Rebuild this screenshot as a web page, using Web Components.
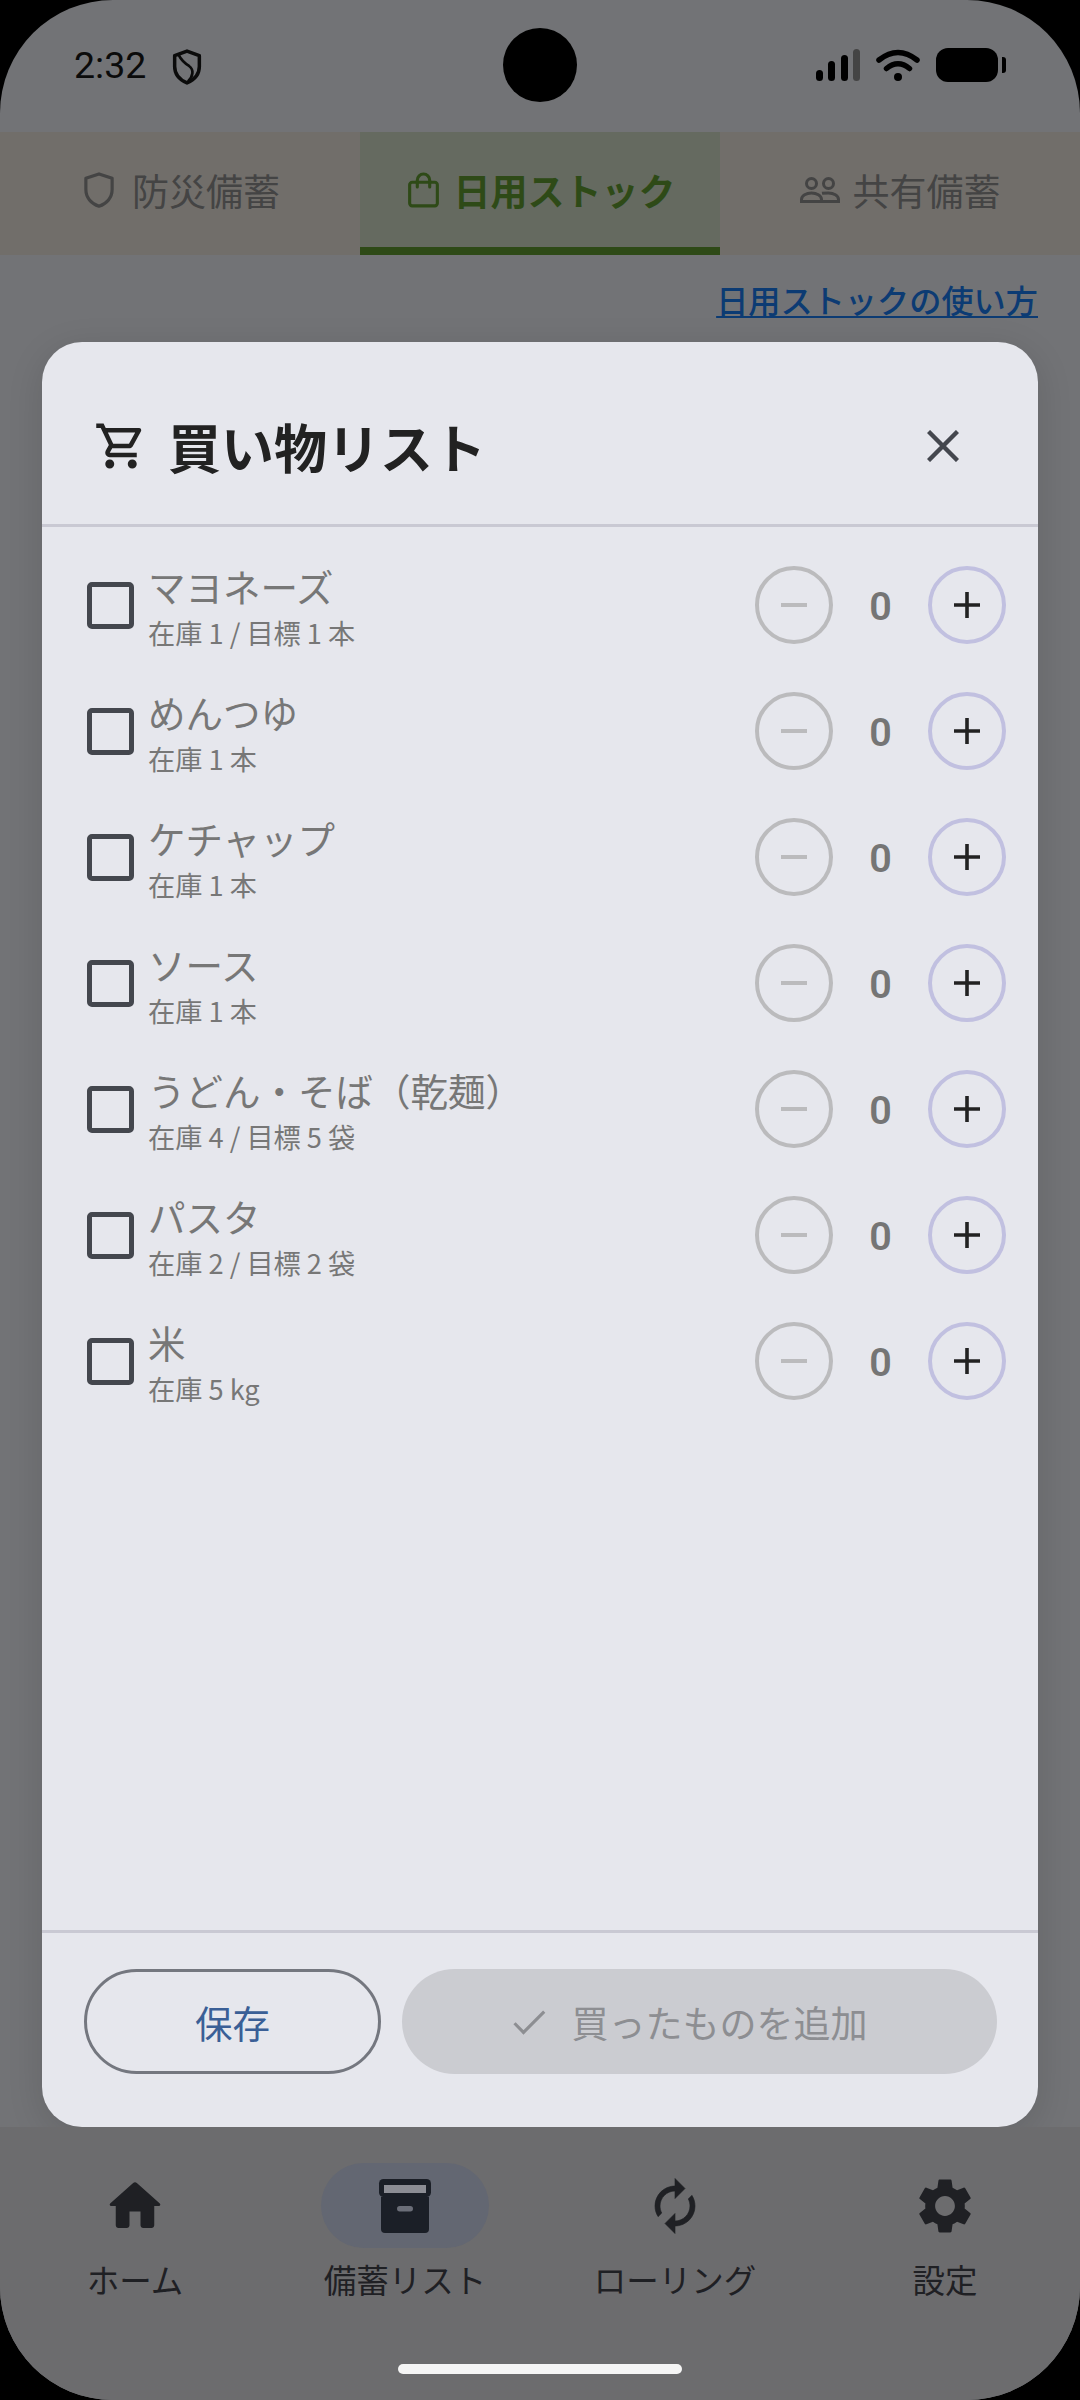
<!DOCTYPE html>
<html lang="ja">
<head>
<meta charset="utf-8">
<title>買い物リスト</title>
<style>
html,body{margin:0;padding:0;background:#000}
body{font-family:"Noto Sans CJK JP","Noto Sans",sans-serif;width:1080px;height:2400px;overflow:hidden}
</style>
</head>
<body>
<app-frame>
  <status-bar slot="top"></status-bar>
  <tab-bar slot="top">
    <tab-item icon="shield">防災備蓄</tab-item>
    <tab-item icon="bag" active>日用ストック</tab-item>
    <tab-item icon="people">共有備蓄</tab-item>
  </tab-bar>
  <help-link slot="top">日用ストックの使い方</help-link>

  <shopping-modal slot="overlay">
    <shop-row>マヨネーズ<span slot="sub">在庫 1 / 目標 1 本</span></shop-row>
    <shop-row>めんつゆ<span slot="sub">在庫 1 本</span></shop-row>
    <shop-row>ケチャップ<span slot="sub">在庫 1 本</span></shop-row>
    <shop-row>ソース<span slot="sub">在庫 1 本</span></shop-row>
    <shop-row>うどん・そば（乾麺）<span slot="sub">在庫 4 / 目標 5 袋</span></shop-row>
    <shop-row>パスタ<span slot="sub">在庫 2 / 目標 2 袋</span></shop-row>
    <shop-row>米<span slot="sub">在庫 5 kg</span></shop-row>
  </shopping-modal>

  <bottom-nav slot="bottom">
    <nav-item icon="home">ホーム</nav-item>
    <nav-item icon="archive" active>備蓄リスト</nav-item>
    <nav-item icon="sync">ローリング</nav-item>
    <nav-item icon="gear">設定</nav-item>
  </bottom-nav>
</app-frame>

<script>
const FONT = '"Noto Sans CJK JP","Noto Sans",sans-serif';
function shadow(el, html){ el.attachShadow({mode:'open'}).innerHTML = html; }

customElements.define('app-frame', class extends HTMLElement{
  connectedCallback(){ if(this.shadowRoot) return; shadow(this, `
  <style>
    :host{display:block;width:1080px;height:2400px;font-family:${FONT}}
    .screen{position:relative;width:1080px;height:2400px;border-radius:113px;overflow:hidden;background:#727376;display:flex;flex-direction:column}
    .grow{flex:1}
  </style>
  <div class="screen">
    <slot name="top"></slot>
    <div class="grow"></div>
    <slot name="overlay"></slot>
    <slot name="bottom"></slot>
  </div>`);}
});

customElements.define('status-bar', class extends HTMLElement{
  connectedCallback(){ if(this.shadowRoot) return; shadow(this, `
  <style>
    :host{display:flex;position:relative;height:132px;box-sizing:border-box;padding:0 74px 2px 74px;align-items:center;justify-content:space-between;color:#0b0b0b}
    .left{display:flex;align-items:center;gap:26px}
    .time{font:400 37.500px/44px Roboto,sans-serif}
    .right{display:flex;align-items:center;gap:16px}
    .cam{position:absolute;left:503px;top:28px;width:74px;height:74px;border-radius:50%;background:#000}
    svg{display:block}
    .shield{margin-top:4px}
    .bat{display:flex;align-items:center;gap:4px}
    .bat i{display:block;width:62px;height:34px;border-radius:12px;background:#000}
    .bat b{display:block;width:4px;height:16px;border-radius:0 3px 3px 0;background:#000}
  </style>
  <div class="left">
    <span class="time">2:32</span>
    <svg class="shield" width="30" height="36" viewBox="0 0 28 35" fill="none" stroke="#0b0b0b" stroke-width="3.400" stroke-linejoin="round"><path d="M14 2 26 6.500V17c0 8-5 13-12 16C7 30 2 25 2 17V6.500Z"/><path d="M6 6c3 6 6 8 10 10.500 5 3.500 4 10-1 15" stroke-width="2.600"/></svg>
  </div>
  <div class="cam"></div>
  <div class="right">
    <svg width="44" height="32" viewBox="0 0 44 32"><rect x="0" y="21" width="7" height="11" rx="3.500" fill="#000"/><rect x="12" y="12" width="7" height="20" rx="3.500" fill="#000"/><rect x="25" y="6" width="7" height="26" rx="3.500" fill="#000"/><rect x="37" y="0" width="7" height="32" rx="3.500" fill="#444"/></svg>
    <svg width="44" height="32" viewBox="0 0 44 32" fill="none" stroke="#000" stroke-linecap="round"><path d="M3 11Q22-4 41 11" stroke-width="5.500"/><path d="M10.500 19.500Q22 10 33.500 19.500" stroke-width="5.500"/><circle cx="22" cy="28" r="4" fill="#000" stroke="none"/></svg>
    <div class="bat"><i></i><b></b></div>
  </div>`);}
});

customElements.define('tab-bar', class extends HTMLElement{
  connectedCallback(){ if(this.shadowRoot) return; shadow(this, `
  <style>:host{display:grid;grid-template-columns:repeat(3,1fr);height:123px}</style><slot></slot>`);}
});

const TAB_ICONS = {
  shield:`<svg width="30" height="36" viewBox="0 0 28 34" fill="none" stroke="currentColor" stroke-width="3" stroke-linejoin="round"><path d="M14 1.800 26.400 6v10.500c0 7.500-5 13.500-12.400 15.800C6.600 30 1.600 24 1.600 16.500V6Z"/></svg>`,
  bag:`<svg width="31" height="36" viewBox="0 0 30 34" fill="none" stroke="currentColor" stroke-width="3" stroke-linejoin="round"><rect x="1.600" y="9.500" width="26.800" height="22.900" rx="2.500"/><path d="M9 14V7.500a6 6 0 0 1 12 0V14" stroke-linecap="round"/></svg>`,
  people:`<svg width="40" height="26" viewBox="0 0 40 26" fill="none" stroke="currentColor" stroke-width="3"><circle cx="11.500" cy="6.500" r="5"/><circle cx="28.500" cy="6.500" r="5"/><path d="M1.500 24.500v-2c0-4 5-6.500 10-6.500s10 2.500 10 6.500v2H1.500Z"/><path d="M22 16.300c2-.3 4-.3 6.500-.3 5 0 10 2.500 10 6.500v2H21.500"/></svg>`
};
customElements.define('tab-item', class extends HTMLElement{
  connectedCallback(){ if(this.shadowRoot) return; shadow(this, `
  <style>
    :host{display:flex;align-items:center;justify-content:center;gap:18px;box-sizing:border-box;background:#716e6a;color:#444;font-size:37px;line-height:50px;font-family:${FONT};padding:0 0 8px 4px}
    :host([icon=people]){gap:13px;padding-left:0}
    :host([active]){background:#656a60;color:#2e4a17;font-weight:700;gap:15px;border-bottom:8px solid #2e4a17;padding:0 0 0 3px}
    svg{display:block}
  </style>${TAB_ICONS[this.getAttribute('icon')]}<span><slot></slot></span>`);}
});

customElements.define('help-link', class extends HTMLElement{
  connectedCallback(){ if(this.shadowRoot) return; shadow(this, `
  <style>
    :host{display:flex;justify-content:flex-end;padding:22px 42px 0 0;color:#0c3b73;font-size:32.200px;line-height:44px;font-weight:500;font-family:${FONT}}
    span{text-decoration:underline;text-underline-offset:3px;text-decoration-thickness:2px}
  </style><span><slot></slot></span>`);}
});

customElements.define('shopping-modal', class extends HTMLElement{
  connectedCallback(){ if(this.shadowRoot) return; shadow(this, `
  <style>
    :host{display:flex;flex-direction:column;position:absolute;left:42px;top:342px;width:996px;height:1785px;background:#e6e7ed;border-radius:40px;box-shadow:0 8px 36px rgba(0,0,0,.12);z-index:1;font-family:${FONT}}
    header{display:flex;align-items:center;box-sizing:border-box;height:185px;padding:26px 79px 0 52px;border-bottom:3px solid #c9c9d3;flex:none}
    h1{margin:0 0 0 20px;flex:1;font-size:53px;line-height:70px;font-weight:700;color:#222}
    .list{flex:1;padding-top:15px}
    footer{flex:none;display:flex;gap:21px;box-sizing:border-box;height:197px;border-top:3px solid #c9c9d3;padding:36px 41px 0 42px}
    button{all:unset;display:flex;align-items:center;justify-content:center;box-sizing:border-box;height:105px;border-radius:53px;font-size:37.500px;font-family:${FONT}}
    .save{width:297px;border:3px solid #74777f;color:#3a5f96}
    .add{flex:1;background:#cbccd1;color:#8d8e92;gap:21px;font-size:37px;padding-right:25px}
    svg{display:block}
    .close{stroke:#44474e}
  </style>
  <header>
    <svg width="54" height="54" viewBox="0 0 24 24" fill="#222"><path d="M15.550 13c.75 0 1.410-.41 1.750-1.030l3.580-6.490c.37-.66-.11-1.480-.87-1.480H5.210l-.94-2H1v2h2l3.600 7.590-1.350 2.440C4.520 15.370 5.480 17 7 17h12v-2H7l1.100-2h7.450zM6.160 6h12.150l-2.760 5H8.530L6.160 6zM7 18c-1.100 0-1.990.9-1.990 2S5.900 22 7 22s2-.9 2-2-.9-2-2-2zm10 0c-1.100 0-1.990.9-1.990 2s.89 2 1.990 2 2-.9 2-2-.9-2-2-2z"/></svg>
    <h1>買い物リスト</h1>
    <svg class="close" width="32" height="32" viewBox="0 0 32 32" fill="none" stroke-width="4.400"><path d="M1.500 1.500l29 29M30.500 1.500l-29 29"/></svg>
  </header>
  <div class="list"><slot></slot></div>
  <footer>
    <button class="save">保存</button>
    <button class="add"><svg width="44" height="44" viewBox="0 0 24 24" fill="none" stroke="#8d8e92" stroke-width="1.700"><path d="M4.100 12.700 9 17.700 20.300 6.300"/></svg>買ったものを追加</button>
  </footer>`);}
});

customElements.define('shop-row', class extends HTMLElement{
  connectedCallback(){ if(this.shadowRoot) return; shadow(this, `
  <style>
    :host{display:flex;align-items:center;height:126px;box-sizing:border-box;padding:0 32px 0 45px;font-family:${FONT}}
    .check{flex:none;width:47px;height:47px;box-sizing:border-box;border:5.500px solid #44474e;border-radius:5px}
    .text{flex:1;margin-left:14px;display:flex;flex-direction:column;color:#777}
    .name{font-size:37.500px;line-height:50px;margin-top:2px}
    .sub{font-size:27.200px;line-height:40px;margin-top:1px}
    .count{flex:none;display:flex;align-items:center}
    .btn{width:78px;height:78px;box-sizing:border-box;border-radius:50%;border:4.500px solid #bbbbbd;display:flex;align-items:center;justify-content:center}
    .plus{border-color:#c1c0e0}
    .val{width:95px;text-align:center;font:600 39.500px/50px Roboto,sans-serif;color:#757575;padding-top:3px}
    svg{display:block}
  </style>
  <div class="check"></div>
  <div class="text"><div class="name"><slot></slot></div><div class="sub"><slot name="sub"></slot></div></div>
  <div class="count">
    <div class="btn"><svg width="26" height="26" viewBox="0 0 26 26" stroke="#bbbbbd" stroke-width="4"><path d="M0 13h26"/></svg></div>
    <div class="val">0</div>
    <div class="btn plus"><svg width="26" height="26" viewBox="0 0 26 26" stroke="#222" stroke-width="3.600"><path d="M0 13h26M13 0v26"/></svg></div>
  </div>`);}
});

customElements.define('bottom-nav', class extends HTMLElement{
  connectedCallback(){ if(this.shadowRoot) return; shadow(this, `
  <style>
    :host{display:flex;flex-direction:column;align-items:center;position:relative;z-index:2;height:273px;box-sizing:border-box;padding-top:36px;background:#6c6c6e}
    .items{display:grid;grid-template-columns:repeat(4,270px)}
    .bar{margin-top:63px;width:284px;height:10px;border-radius:5px;background:#f5f5f5}
  </style>
  <div class="items"><slot></slot></div><div class="bar"></div>`);}
});

const NAV_ICONS = {
  home:`<svg width="66" height="66" viewBox="0 0 24 24" fill="#1f2024"><path d="M10 19v-5h4v5c0 .55.45 1 1 1h3c.55 0 1-.45 1-1v-7h1.700c.46 0 .68-.57.33-.87L12.670 3.600c-.38-.34-.96-.34-1.340 0l-8.360 7.530c-.34.3-.13.87.33.87H5v7c0 .55.45 1 1 1h3c.55 0 1-.45 1-1z"/></svg>`,
  archive:`<svg width="54" height="54" viewBox="0 0 54 54"><rect x="1" y="0" width="52" height="18" rx="4.500" fill="#1b1f27"/><rect x="6" y="6" width="42" height="8" fill="#8c8d94"/><path d="M3 18h48v32a4 4 0 0 1-4 4H7a4 4 0 0 1-4-4Z" fill="#1b1f27"/><rect x="19" y="27" width="16" height="5.500" rx="2.750" fill="#6b6e78"/></svg>`,
  sync:`<svg width="60" height="60" viewBox="0 0 24 24" fill="#1f2024" stroke="#1f2024" stroke-width=".25" stroke-linejoin="round"><path d="M12 6v3l4-4-4-4v3c-4.420 0-8 3.580-8 8 0 1.570.46 3.030 1.240 4.260L6.700 14.800c-.45-.83-.7-1.790-.7-2.800 0-3.310 2.690-6 6-6zm6.760 1.740L17.300 9.200c.44.84.7 1.790.7 2.800 0 3.310-2.690 6-6 6v-3l-4 4 4 4v-3c4.420 0 8-3.580 8-8 0-1.570-.46-3.030-1.240-4.260z"/></svg>`,
  gear:`<svg width="66" height="66" viewBox="0 0 24 24" fill="#1f2024"><path d="M19.140 12.940c.04-.3.06-.61.06-.94 0-.32-.02-.64-.07-.94l2.030-1.580c.18-.14.23-.41.12-.61l-1.920-3.320c-.12-.22-.37-.29-.59-.22l-2.390.96c-.5-.38-1.030-.7-1.620-.94l-.36-2.540c-.04-.24-.24-.41-.48-.41h-3.840c-.24 0-.43.17-.47.41l-.36 2.540c-.59.24-1.130.57-1.620.94l-2.390-.96c-.22-.08-.47 0-.59.22L2.740 8.870c-.12.21-.08.47.12.61l2.030 1.580c-.05.3-.09.63-.09.94s.02.64.07.94l-2.030 1.580c-.18.14-.23.41-.12.61l1.920 3.320c.12.22.37.29.59.22l2.390-.96c.5.38 1.030.7 1.620.94l.36 2.540c.05.24.24.41.48.41h3.840c.24 0 .44-.17.47-.41l.36-2.540c.59-.24 1.130-.56 1.620-.94l2.390.96c.22.08.47 0 .59-.22l1.920-3.320c.12-.22.07-.47-.12-.61l-2.010-1.580zM12 15.600c-1.980 0-3.600-1.620-3.600-3.600s1.620-3.600 3.600-3.600 3.600 1.620 3.600 3.600-1.620 3.600-3.600 3.600z"/></svg>`
};
customElements.define('nav-item', class extends HTMLElement{
  connectedCallback(){ if(this.shadowRoot) return; shadow(this, `
  <style>
    :host{display:flex;flex-direction:column;align-items:center;color:#1f2024;font-size:32.500px;line-height:44px;font-family:${FONT}}
    .pill{width:168px;height:85px;border-radius:43px;display:flex;align-items:center;justify-content:center}
    :host([active]) .pill{background:#636772}
    .label{margin-top:9px}
    svg{display:block}
  </style>
  <div class="pill">${NAV_ICONS[this.getAttribute('icon')]}</div><div class="label"><slot></slot></div>`);}
});
</script>
</body>
</html>
